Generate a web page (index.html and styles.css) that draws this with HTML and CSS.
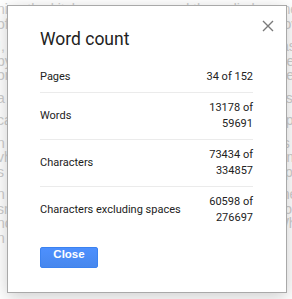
FILE: index.html
```html
<!DOCTYPE html>
<html lang="en">
<head>
    <meta charset="UTF-8">
    <title>Word count</title>
    <link rel="stylesheet" href="styles.css">
</head>
<body>
<!--  document text behind the dialog  -->
<div class="doc">
    <p>ning the kitchen was warm and the radio hummed along to the old song</p>
    <p>of the morning while the kettle rattled on the stove and the bread rose.</p>
    <p class="gap">I, for one, could hardly wait for the long breakfast to be served</p>
    <p>by the window as the sun came through and the dog lay asleep there.</p>
    <p>or was it the smell of coffee that made everyone come down early?</p>
    <p class="gap">a little later the children ran in with muddy boots and loud voices</p>
    <p class="gap">calling out for pancakes, toast and jam, and cups of hot chocolate.</p>
    <p class="gap">n the garden the roses were in bloom and bees went from one to another</p>
    <p>vhat could be better than a quiet morning at home with the family near</p>
    <p>s the warm light spread over the table and the plates and the chairs?</p>
    <p class="gap">n the end it was the simple things that they remembered the most, the</p>
    <p>smell of bacon, the laughter, the sound of rain on the window glass, the</p>
    <p>noise of cups and the feeling of being home. What could be better?</p>
    <p>n the air and eggs frying in a pan?</p>
</div>

<div class="dialog">
    <span class="close-x">
        <svg width="12" height="12" viewBox="0 0 12 12">
            <path d="M1 1 L11 11 M11 1 L1 11" stroke="#7a7a7a" stroke-width="1.4" fill="none"/>
        </svg>
    </span>
    <div class="title">Word count</div>
    <div class="rows">
        <div class="row">
            <span class="label">Pages</span>
            <span class="value">34 of 152</span>
        </div>
        <div class="row">
            <span class="label">Words</span>
            <span class="value">13178 of 59691</span>
        </div>
        <div class="row">
            <span class="label">Characters</span>
            <span class="value">73434 of 334857</span>
        </div>
        <div class="row last">
            <span class="label">Characters excluding spaces</span>
            <span class="value">60598 of 276697</span>
        </div>
    </div>
    <div class="buttons">
        <span class="btn">Close</span>
    </div>
</div>
</body>
</html>
```

FILE: styles.css
```css
body {
margin:0;
background:#fff;
overflow:hidden;
width:292px;
height:299px;
position:relative;
}

/* faded page text behind the modal */
.doc {
margin-left:-3px;
padding-top:2px;
font:14px "Liberation Sans", Arial, sans-serif;
color:#cdcdcd;
white-space:nowrap;
}
.doc p {
margin:0;
line-height:14.5px;
}
.doc p.gap {
margin-top:8px;
}

/* dialog box */
.dialog {
position:absolute;
left:7px;
top:5px;
width:213px;
height:264px;
padding:22px 33px 0 32px;
background:#fff;
border:1px solid #a9a9a9;
box-shadow:0 4px 16px rgba(0,0,0,0.2);
font-family:Roboto, "Liberation Sans", sans-serif;
color:#222;
}
.close-x {
position:absolute;
right:12px;
top:14px;
width:12px;
height:12px;
}
.close-x svg {display:block;}

.title {
font-size:17.5px;
line-height:22px;
color:#222;
}

.rows {
margin-top:12px;
font-size:11px;
line-height:16px;
}
.row {
display:flex;
justify-content:space-between;
align-items:center;
padding:7px 0;
border-bottom:1px solid #ebebeb;
}
.row.last {border-bottom:none;}
.row .value {
max-width:60px;
text-align:right;
}

/* blue action button */
.buttons {
margin-top:10px;
}
.btn {
display:inline-block;
width:56px;
height:19px;
line-height:19px;
text-align:center;
background:linear-gradient(#4d90fe, #4787ed);
border:1px solid #3b82f0;
border-radius:2px;
color:#fff;
font:bold 11.5px "Liberation Sans", Arial, sans-serif;
}
```
